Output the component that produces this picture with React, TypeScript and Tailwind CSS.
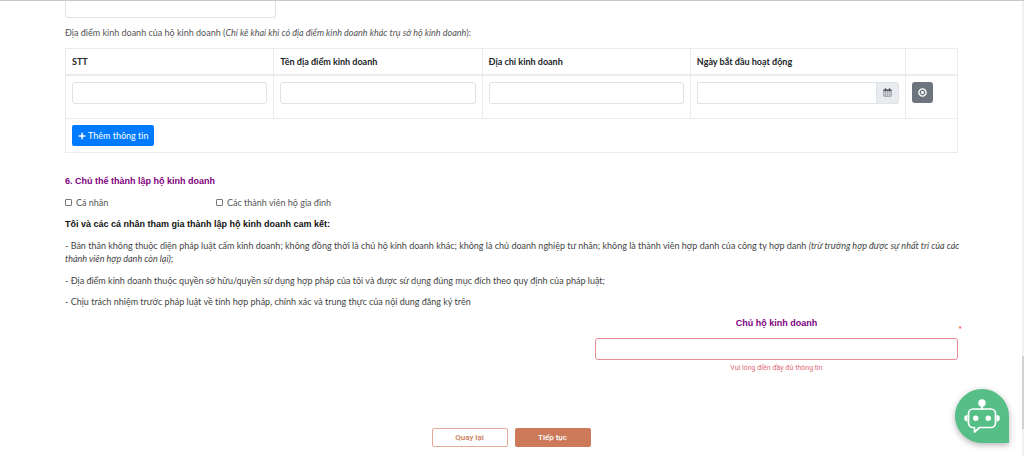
import { FaPlus } from "react-icons/fa";

const columns = ["STT", "Tên địa điểm kinh doanh", "Địa chỉ kinh doanh"];

function CalendarIcon() {
  return (
    <svg viewBox="0 0 18 18" className="h-[9px] w-[9px]" fill="none" stroke="#7b8288" aria-hidden="true">
      <path d="M1.500 3.500h15v13h-15z" strokeWidth="1.4" />
      <path d="M1.500 3.500h15v2.500h-15z" fill="#5a6268" stroke="#5a6268" />
      <path d="M5 .5v4.500M13 .5v4.500" stroke="#495057" strokeWidth="2.2" />
      <path d="M1 9.500h16M1 13.200h16M5 6v11M9 6v11M13 6v11" strokeWidth="0.8" />
    </svg>
  );
}

function CircleXIcon() {
  return (
    <svg viewBox="0 0 16 16" className="h-[9px] w-[9px]" fill="none" stroke="#fff" aria-hidden="true">
      <circle cx="8" cy="8" r="6.4" strokeWidth="2.4" />
      <path d="M6 6l4 4M10 6l-4 4" strokeWidth="2.6" />
    </svg>
  );
}

function BotIcon() {
  return (
    <svg viewBox="0 0 54 54" className="block h-[54px] w-[54px]" fill="none" aria-hidden="true">
      <g fill="#fff">
        <circle cx="27" cy="14" r="3.7" />
        <rect x="26" y="15" width="2" height="6" />
        <path d="M12.500 26a3.200 3.200 0 0 0 0 6.600zM41.500 26a3.200 3.200 0 0 1 0 6.600z" />
        <circle cx="20.7" cy="29.3" r="2.7" />
        <circle cx="33.3" cy="29.3" r="2.7" />
      </g>
      <path
        d="M18 20h18a4.500 4.500 0 0 1 4.500 4.500v9.500a4.500 4.500 0 0 1-4.500 4.500H24.500l-5 4.500v-4.500H18a4.500 4.500 0 0 1-4.500-4.500v-9.500A4.500 4.500 0 0 1 18 20z"
        stroke="#fff"
        strokeWidth="1.7"
        strokeLinejoin="round"
      />
    </svg>
  );
}

const field = "block h-[22px] w-full min-w-0 rounded-[3px] border border-[#dfe2e6] bg-white px-2 text-[9px] outline-none";
const cell = "border border-[#e9ecef]";
const tick = "h-[7px] w-[7px] appearance-none rounded-[1px] border border-[#777]";

export default function App() {
  return (
    <div className="relative border-t border-[#c8c8c8] bg-white font-[family-name:Lato,sans-serif] text-[9px] leading-[13px] text-[#444] [font-variant-ligatures:none]">
      <main className="pr-[66px] pl-[65px]">
        <input aria-label="Thông tin bổ sung" className="block h-[17px] w-[211px] rounded-b-[3px] border border-t-0 border-[#dfe2e6] outline-none" />
        <p className="mt-2 text-[#555]">
          Địa điểm kinh doanh của hộ kinh doanh (<em>Chỉ kê khai khi có địa điểm kinh doanh khác trụ sở hộ kinh doanh</em>):
        </p>
        <table className="mt-[9px] w-full table-fixed border-collapse">
          <colgroup>
            <col className="w-[23.35%]" />
            <col className="w-[23.35%]" />
            <col className="w-[23.35%]" />
            <col className="w-[24.15%]" />
            <col />
          </colgroup>
          <thead>
            <tr className="h-[26px] text-left text-[#212529]">
              {columns.map((c) => (
                <th key={c} className={`${cell} border-b-2 px-1.5 font-bold`}>{c}</th>
              ))}
              <th className={`${cell} border-b-2 px-1.5 font-bold`}>Ngày bắt đầu hoạt động</th>
              <th className={`${cell} border-b-2`} aria-label="Thao tác" />
            </tr>
          </thead>
          <tbody>
            <tr className="h-[44px] align-top">
              {columns.map((c) => (
                <td key={c} className={`${cell} px-1.5 pt-1.5`}>
                  <input aria-label={c} className={field} />
                </td>
              ))}
              <td className={`${cell} px-1.5 pt-1.5`}>
                <div className="flex">
                  <input aria-label="Ngày bắt đầu hoạt động" className="h-[22px] min-w-0 flex-1 border border-[#dfe2e6] px-2 outline-none" />
                  <button type="button" aria-label="Chọn ngày" className="flex h-[22px] w-[22px] items-center justify-center rounded-r-[3px] border border-l-0 border-[#dfe2e6] bg-[#e9ecef]">
                    <CalendarIcon />
                  </button>
                </div>
              </td>
              <td className={`${cell} px-1.5 pt-1.5`}>
                <button type="button" aria-label="Xóa dòng" className="flex h-[21px] w-[21px] items-center justify-center rounded-[3px] bg-[#6c757d]">
                  <CircleXIcon />
                </button>
              </td>
            </tr>
            <tr className="h-[34px]">
              <td colSpan={5} className={`${cell} px-1.5`}>
                <button type="button" className="flex h-[21px] items-center gap-0.5 rounded-[2px] bg-[#007bff] px-1.5 text-white">
                  <FaPlus className="h-2 w-2" />
                  Thêm thông tin
                </button>
              </td>
            </tr>
          </tbody>
        </table>

        <h2 className="mt-[22px] font-[family-name:'Liberation_Sans',sans-serif] font-bold text-[#800080]">6. Chủ thể thành lập hộ kinh doanh</h2>
        <div className="mt-2 flex text-[#555]">
          <label className="flex w-[151px] items-center gap-1">
            <input type="checkbox" className={tick} />
            Cá nhân
          </label>
          <label className="flex items-center gap-1">
            <input type="checkbox" className={tick} />
            Các thành viên hộ gia đình
          </label>
        </div>
        <p className="mt-[9px] font-[family-name:'Liberation_Sans',sans-serif] font-bold text-[#111]">
          Tôi và các cá nhân tham gia thành lập hộ kinh doanh cam kết:
        </p>
        <p className="mt-2 -mr-4">
          - Bản thân không thuộc diện pháp luật cấm kinh doanh; không đồng thời là chủ hộ kinh doanh khác; không là chủ doanh nghiệp tư nhân; không là thành viên hợp danh của công ty hợp danh <em>(trừ trường hợp được sự nhất trí của các thành viên hợp danh còn lại)</em>;
        </p>
        <p className="mt-[9px]">- Địa điểm kinh doanh thuộc quyền sở hữu/quyền sử dụng hợp pháp của tôi và được sử dụng đúng mục đích theo quy định của pháp luật;</p>
        <p className="mt-2">- Chịu trách nhiệm trước pháp luật về tính hợp pháp, chính xác và trung thực của nội dung đăng ký trên</p>

        <section className="relative mt-[9px] ml-auto w-[363px] text-center">
          <label htmlFor="owner" className="block font-[family-name:'Liberation_Sans',sans-serif] font-bold text-[#800080]">Chủ hộ kinh doanh</label>
          <span className="absolute top-[6px] -right-1 text-[#f33]">*</span>
          <input id="owner" className="mt-2 block h-[22px] w-full rounded-[3px] border border-[#e88a92] px-2 outline-none" />
          <p className="mt-[2px] font-[family-name:Roboto,sans-serif] text-[7px] leading-3 text-[#e06c77]">Vui lòng điền đầy đủ thông tin</p>
        </section>
      </main>

      <div className="mt-[54px] flex justify-center gap-[7px] pr-[2px] pb-[9px] font-[family-name:Roboto,sans-serif] text-[8px] font-medium">
        <button type="button" className="h-[19px] w-[76px] rounded-[2px] border border-[#e3ab96] bg-white text-[#cc7a5a]">Quay lại</button>
        <button type="button" className="h-[19px] w-[76px] rounded-[2px] bg-[#cc7a5a] text-white">Tiếp tục</button>
      </div>

      <div className="absolute inset-y-0 right-0 w-[2px] bg-[#f1f1f1]">
        <div className="absolute bottom-[27px] h-[73px] w-full bg-[#d2d2d2]" />
      </div>
      <button type="button" aria-label="Trợ lý ảo" className="fixed right-[15px] bottom-[13px] h-[54px] w-[54px] rounded-t-full rounded-bl-full bg-[#55bf87] shadow-[0_2px_6px_rgba(0,0,0,0.3)]">
        <BotIcon />
      </button>
    </div>
  );
}
